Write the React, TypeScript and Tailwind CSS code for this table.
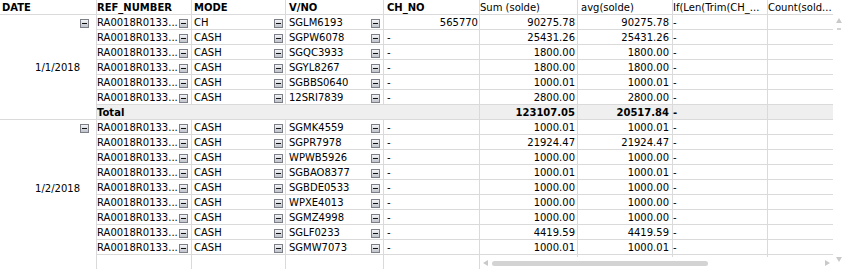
import React from 'react';

type Row = { mode: string; vno: string; ch: string; sum: string; avg: string };

const day1: Row[] = [
  { mode: 'CH', vno: 'SGLM6193', ch: '565770', sum: '90275.78', avg: '90275.78' },
  { mode: 'CASH', vno: 'SGPW6078', ch: '-', sum: '25431.26', avg: '25431.26' },
  { mode: 'CASH', vno: 'SGQC3933', ch: '-', sum: '1800.00', avg: '1800.00' },
  { mode: 'CASH', vno: 'SGYL8267', ch: '-', sum: '1800.00', avg: '1800.00' },
  { mode: 'CASH', vno: 'SGBBS0640', ch: '-', sum: '1000.01', avg: '1000.01' },
  { mode: 'CASH', vno: '12SRI7839', ch: '-', sum: '2800.00', avg: '2800.00' },
];

const day2: Row[] = [
  { mode: 'CASH', vno: 'SGMK4559', ch: '-', sum: '1000.01', avg: '1000.01' },
  { mode: 'CASH', vno: 'SGPR7978', ch: '-', sum: '21924.47', avg: '21924.47' },
  { mode: 'CASH', vno: 'WPWB5926', ch: '-', sum: '1000.00', avg: '1000.00' },
  { mode: 'CASH', vno: 'SGBAO8377', ch: '-', sum: '1000.01', avg: '1000.01' },
  { mode: 'CASH', vno: 'SGBDE0533', ch: '-', sum: '1000.00', avg: '1000.00' },
  { mode: 'CASH', vno: 'WPXE4013', ch: '-', sum: '1000.00', avg: '1000.00' },
  { mode: 'CASH', vno: 'SGMZ4998', ch: '-', sum: '1000.00', avg: '1000.00' },
  { mode: 'CASH', vno: 'SGLF0233', ch: '-', sum: '4419.59', avg: '4419.59' },
  { mode: 'CASH', vno: 'SGMW7073', ch: '-', sum: '1000.01', avg: '1000.01' },
];

const cell = 'flex h-full shrink-0 items-center overflow-hidden whitespace-nowrap border-r border-[#dadada] pt-[2px]';
const row = 'flex h-[15px] shrink-0 border-b border-[#dadada]';

// little collapse button used by the pivot dimensions
function Minus() {
  return (
    <span className="flex h-[9px] w-[9px] shrink-0 items-center justify-center border border-[#7c7f87] bg-linear-to-b from-[#f4f5f7] to-[#bfc3ca]">
      <span className="h-px w-[5px] bg-[#111]" />
    </span>
  );
}

function Arrow({ dir }: { dir: 'up' | 'down' | 'left' | 'right' }) {
  const pts = {
    up: '3,0 6,5 0,5',
    down: '0,0 6,0 3,5',
    left: '5,0 5,6 0,3',
    right: '0,0 5,3 0,6',
  }[dir];
  const horiz = dir === 'left' || dir === 'right';
  return (
    <svg width={horiz ? 5 : 6} height={horiz ? 6 : 5} className="shrink-0">
      <polygon points={pts} fill="#c9c9c9" />
    </svg>
  );
}

function LeftRow({ r }: { r: Row }) {
  return (
    <div className={row}>
      <div className={`${cell} w-[95px] pr-[3px]`}>
        <span className="flex-1">RA0018R0133...</span>
        <Minus />
      </div>
      <div className={`${cell} w-[94px] pl-[2px] pr-[2px]`}>
        <span className="flex-1">{r.mode}</span>
        <Minus />
      </div>
      <div className={`${cell} w-[98px] pl-[3px] pr-[3px]`}>
        <span className="flex-1">{r.vno}</span>
        <Minus />
      </div>
      <div className={`${cell} w-[96px] ${r.ch === '-' ? 'pl-[3px]' : 'justify-end pr-px'}`}>{r.ch}</div>
    </div>
  );
}

function RightRow({ r }: { r: Row }) {
  return (
    <div className={row}>
      <div className={`${cell} w-[98px] justify-end pr-[2px]`}>{r.sum}</div>
      <div className={`${cell} w-[95px] justify-end pr-[3px]`}>{r.avg}</div>
      <div className={`${cell} w-[95px]`}>-</div>
      <div className="w-[65px] shrink-0" />
    </div>
  );
}

function DateCell({ label, rows, last }: { label: string; rows: number; last?: boolean }) {
  return (
    <div className={`relative w-[97px] shrink-0 border-r border-[#dadada] ${last ? 'flex-1' : 'border-b'}`}>
      <div
        className={`flex items-center justify-end pr-[16px] pt-[2px] ${rows === 7 ? 'h-[104px]' : 'h-[135px]'}`}
      >
        {label}
      </div>
      <span className="absolute right-[7px] top-[4px] flex">
        <Minus />
      </span>
    </div>
  );
}

export default function App() {
  return (
    <div className="flex h-[269px] w-[845px] overflow-hidden bg-white font-['DejaVu_Sans',sans-serif] text-[10px] leading-[14px] text-black">
      {/* frozen dimension columns */}
      <div className="flex w-[480px] shrink-0 flex-col">
        <div className={`${row} font-bold`}>
          <div className={`${cell} w-[97px] pl-[2px]`}>DATE</div>
          <div className={`${cell} w-[95px]`}>REF_NUMBER</div>
          <div className={`${cell} w-[94px] pl-[2px]`}>MODE</div>
          <div className={`${cell} w-[98px] pl-[3px]`}>V/NO</div>
          <div className={`${cell} w-[96px] pl-[3px]`}>CH_NO</div>
        </div>
        <div className="flex flex-1">
          <div className="flex flex-col">
            <DateCell label="1/1/2018" rows={7} />
            <DateCell label="1/2/2018" rows={9} last />
          </div>
          <div className="flex flex-1 flex-col">
            {day1.map((r) => (
              <LeftRow key={r.vno} r={r} />
            ))}
            <div className={`${row} bg-[#efefef] font-bold`}>
              <div className={`${cell} w-[383px]`}>Total</div>
            </div>
            {day2.map((r) => (
              <LeftRow key={r.vno} r={r} />
            ))}
            <div className="flex flex-1">
              <div className="w-[95px] border-r border-[#dadada]" />
              <div className="w-[94px] border-r border-[#dadada]" />
              <div className="w-[98px] border-r border-[#dadada]" />
              <div className="w-[96px] border-r border-[#dadada]" />
            </div>
          </div>
        </div>
      </div>

      {/* scrolling expression columns */}
      <div className="flex w-[353px] shrink-0 flex-col">
        <div className="flex h-[257px] flex-col overflow-hidden">
          <div className={row}>
            <div className={`${cell} w-[98px]`}>Sum (solde)</div>
            <div className={`${cell} w-[95px] pl-[3px]`}>avg(solde)</div>
            <div className={`${cell} w-[95px]`}>If(Len(Trim(CH_...</div>
            <div className="flex h-full w-[65px] shrink-0 items-center overflow-hidden whitespace-nowrap pt-[2px]">
              Count(sold...
            </div>
          </div>
          {day1.map((r) => (
            <RightRow key={r.vno} r={r} />
          ))}
          <div className={`${row} bg-[#efefef] font-bold`}>
            <div className={`${cell} w-[98px] justify-end pr-[2px]`}>123107.05</div>
            <div className={`${cell} w-[95px] justify-end pr-[3px]`}>20517.84</div>
            <div className={`${cell} w-[95px]`}>-</div>
            <div className="w-[65px] shrink-0" />
          </div>
          {day2.map((r) => (
            <RightRow key={r.vno} r={r} />
          ))}
          <div className="flex h-[10px] shrink-0">
            <div className="w-[98px] border-r border-[#dadada]" />
            <div className="w-[95px] border-r border-[#dadada]" />
            <div className="w-[95px] border-r border-[#dadada]" />
          </div>
        </div>
        <div className="flex h-[12px] items-end pb-[3px] pl-[3px] pr-[3px]">
          <Arrow dir="left" />
          <div className="ml-[4px] h-[5px] w-[216px] rounded-full bg-[#d3d3d3]" />
          <div className="flex-1" />
          <Arrow dir="right" />
        </div>
      </div>

      {/* vertical scrollbar */}
      <div className="flex w-[12px] shrink-0 flex-col items-center pb-[7px] pt-[18px]">
        <Arrow dir="up" />
        <div className="mt-[5px] h-[2px] w-[4px] bg-[#d3d3d3]" />
        <div className="flex-1" />
        <Arrow dir="down" />
      </div>
    </div>
  );
}
